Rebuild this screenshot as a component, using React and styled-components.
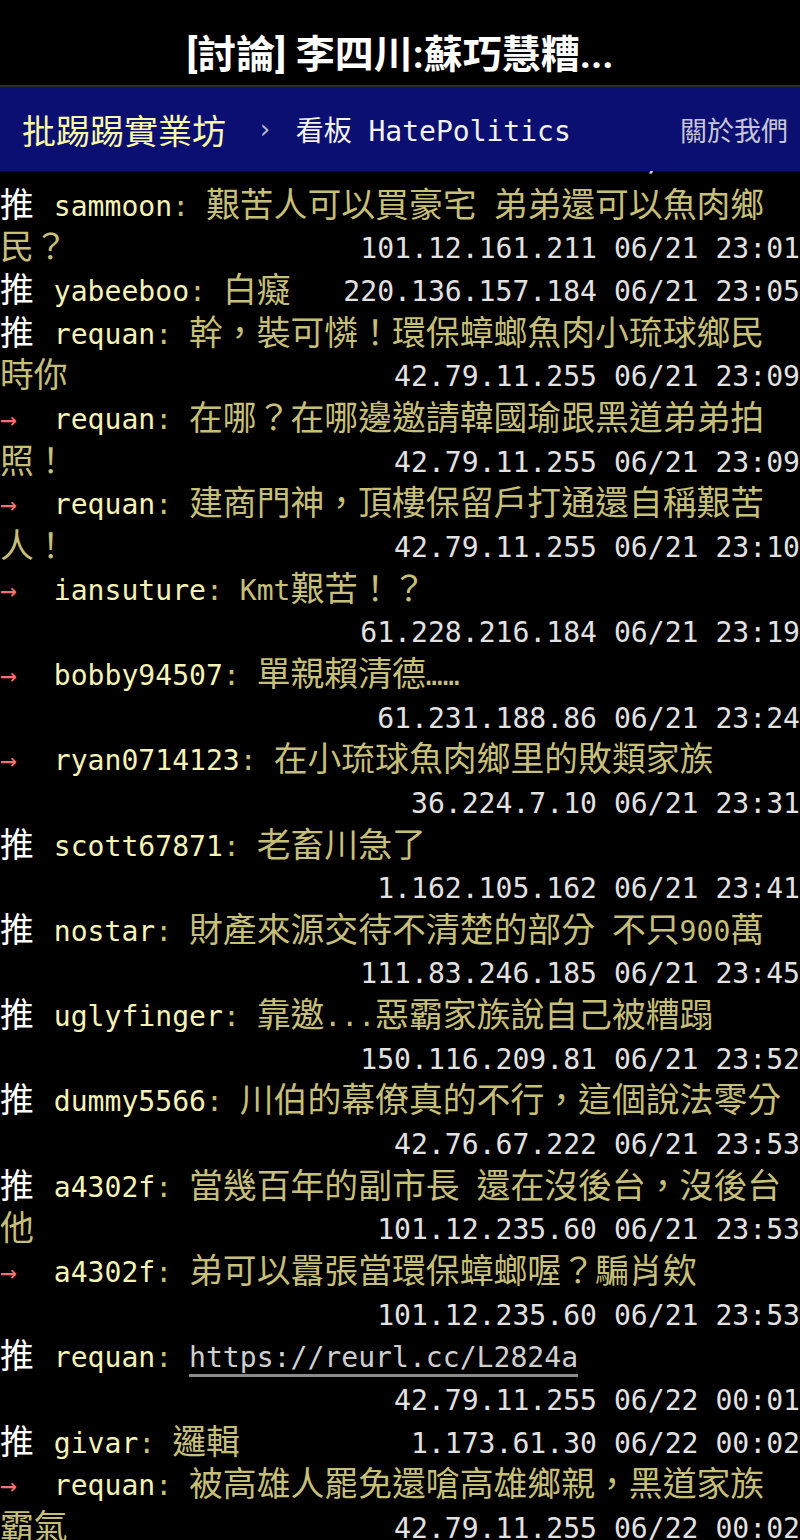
import React from 'react'
import styled, { createGlobalStyle } from 'styled-components'

const FONT = 28.1
const CELL = FONT * 0.602
const LINE = 42.67

const comments = [
  { tag: '推', user: 'sammoon', text: '艱苦人可以買豪宅 弟弟還可以魚肉鄉', more: '民？', ip: '101.12.161.211 06/21 23:01' },
  { tag: '推', user: 'yabeeboo', text: '白癡', ip: '220.136.157.184 06/21 23:05', inline: true },
  { tag: '推', user: 'requan', text: '幹，裝可憐！環保蟑螂魚肉小琉球鄉民', more: '時你', ip: '42.79.11.255 06/21 23:09' },
  { tag: '→', user: 'requan', text: '在哪？在哪邊邀請韓國瑜跟黑道弟弟拍', more: '照！', ip: '42.79.11.255 06/21 23:09' },
  { tag: '→', user: 'requan', text: '建商門神，頂樓保留戶打通還自稱艱苦', more: '人！', ip: '42.79.11.255 06/21 23:10' },
  { tag: '→', user: 'iansuture', text: 'Kmt艱苦！？', ip: '61.228.216.184 06/21 23:19' },
  { tag: '→', user: 'bobby94507', text: '單親賴清德……', ip: '61.231.188.86 06/21 23:24' },
  { tag: '→', user: 'ryan0714123', text: '在小琉球魚肉鄉里的敗類家族', ip: '36.224.7.10 06/21 23:31' },
  { tag: '推', user: 'scott67871', text: '老畜川急了', ip: '1.162.105.162 06/21 23:41' },
  { tag: '推', user: 'nostar', text: '財產來源交待不清楚的部分 不只900萬', ip: '111.83.246.185 06/21 23:45' },
  { tag: '推', user: 'uglyfinger', text: '靠邀...惡霸家族說自己被糟蹋', ip: '150.116.209.81 06/21 23:52' },
  { tag: '推', user: 'dummy5566', text: '川伯的幕僚真的不行，這個說法零分', ip: '42.76.67.222 06/21 23:53' },
  { tag: '推', user: 'a4302f', text: '當幾百年的副市長 還在沒後台，沒後台', more: '他', ip: '101.12.235.60 06/21 23:53' },
  { tag: '→', user: 'a4302f', text: '弟可以囂張當環保蟑螂喔？騙肖欸', ip: '101.12.235.60 06/21 23:53' },
  { tag: '推', user: 'requan', link: 'https://reurl.cc/L2824a', ip: '42.79.11.255 06/22 00:01' },
  { tag: '推', user: 'givar', text: '邏輯', ip: '1.173.61.30 06/22 00:02', inline: true },
  { tag: '→', user: 'requan', text: '被高雄人罷免還嗆高雄鄉親，黑道家族', more: '霸氣', ip: '42.79.11.255 06/22 00:02' },
]

const GlobalStyle = createGlobalStyle`
  html, body {
    margin: 0;
    padding: 0;
    background: #000;
  }
  body {
    font-family: "DejaVu Sans Mono", "Noto Sans CJK TC", monospace;
  }
`

const Page = styled.div`
  width: 800px;
  height: 1540px;
  display: flex;
  flex-direction: column;
  background: #000;
  overflow: hidden;
`

const Header = styled.header`
  height: 85px;
  box-sizing: border-box;
  padding-top: 33px;
  text-align: center;
  color: #fff;
  font-family: Roboto, "Noto Sans CJK TC", sans-serif;
  font-weight: 700;
  font-size: 39px;
  line-height: 44px;
  white-space: nowrap;
  flex-shrink: 0;
`

const Navbar = styled.nav`
  height: 84px;
  border-top: 2px solid #2c2c36;
  background: #0c0f72;
  display: flex;
  align-items: center;
  padding: 0 12px 0 22px;
  flex-shrink: 0;
`

const Brand = styled.span`
  font-family: "Noto Sans CJK TC", sans-serif;
  font-size: 34px;
  color: #fbfba6;
`

const Crumb = styled.span`
  margin-left: 31px;
  color: #b8b8cc;
  font-size: 26px;
`

const Board = styled.span`
  margin-left: 23px;
  color: #f2f2f2;
  font-size: 28px;
`

const About = styled.span`
  margin-left: auto;
  font-family: "Noto Sans CJK TC", sans-serif;
  font-size: 27px;
  color: #c6c6d6;
`

const Viewport = styled.main`
  flex: 1;
  overflow: hidden;
`

const List = styled.div`
  margin-top: -28px;
  font-size: ${FONT}px;
`

const Line = styled.div`
  height: ${LINE}px;
  line-height: ${LINE}px;
  display: flex;
  justify-content: space-between;
  white-space: pre;
`

const HiddenLine = styled(Line)`
  line-height: 37px;
`

const Tag = styled.span`
  display: inline-block;
  width: ${CELL * 3 + 3}px;
  color: ${({ $push }) => ($push ? '#ffffff' : '#f07272')};
`

const User = styled.span`
  color: #f5f3b5;
`

const Content = styled.span`
  color: #c6bf78;
`

const Wide = styled.span`
  font-family: "Noto Sans CJK TC", sans-serif;
  font-size: ${CELL * 2}px;
  line-height: 0;
  vertical-align: -1px;
`

const Link = styled.span`
  color: #cfcfcf;
  text-decoration: underline;
  text-decoration-color: #8a8a8a;
  text-decoration-thickness: 3px;
  text-underline-offset: 7px;
`

const Ip = styled.span`
  color: #e2e2e2;
`

const WIDE_RE = /([\u2e80-\u9fff\uff00-\uffef]+)/

function Mixed({ text }) {
  return text.split(WIDE_RE).map((part, i) =>
    i % 2 === 1 ? <Wide key={i}>{part}</Wide> : part
  )
}

function Comment({ c }) {
  const head = (
    <span>
      <Tag $push={c.tag === '推'}>{c.tag === '推' ? <Wide>推</Wide> : '→'}</Tag>
      <User>{c.user}</User>
      <Content>
        {': '}
        {c.link ? <Link>{c.link}</Link> : <Mixed text={c.text} />}
      </Content>
    </span>
  )

  if (c.inline) {
    return (
      <Line>
        {head}
        <Ip>{c.ip}</Ip>
      </Line>
    )
  }

  return (
    <>
      <Line>{head}</Line>
      <Line>
        <Content>{c.more ? <Mixed text={c.more} /> : ''}</Content>
        <Ip>{c.ip}</Ip>
      </Line>
    </>
  )
}

const App = () => {
  return (
    <Page>
      <GlobalStyle />
      <Header>[討論] 李四川:蘇巧慧糟...</Header>
      <Navbar>
        <Brand>批踢踢實業坊</Brand>
        <Crumb>›</Crumb>
        <Board>看板 HatePolitics</Board>
        <About>關於我們</About>
      </Navbar>
      <Viewport>
        <List>
          <HiddenLine>
            <span />
            <Ip>101.10.167.186 06/21 22:58</Ip>
          </HiddenLine>
          {comments.map((c, i) => (
            <Comment key={i} c={c} />
          ))}
        </List>
      </Viewport>
    </Page>
  )
}

export default App
